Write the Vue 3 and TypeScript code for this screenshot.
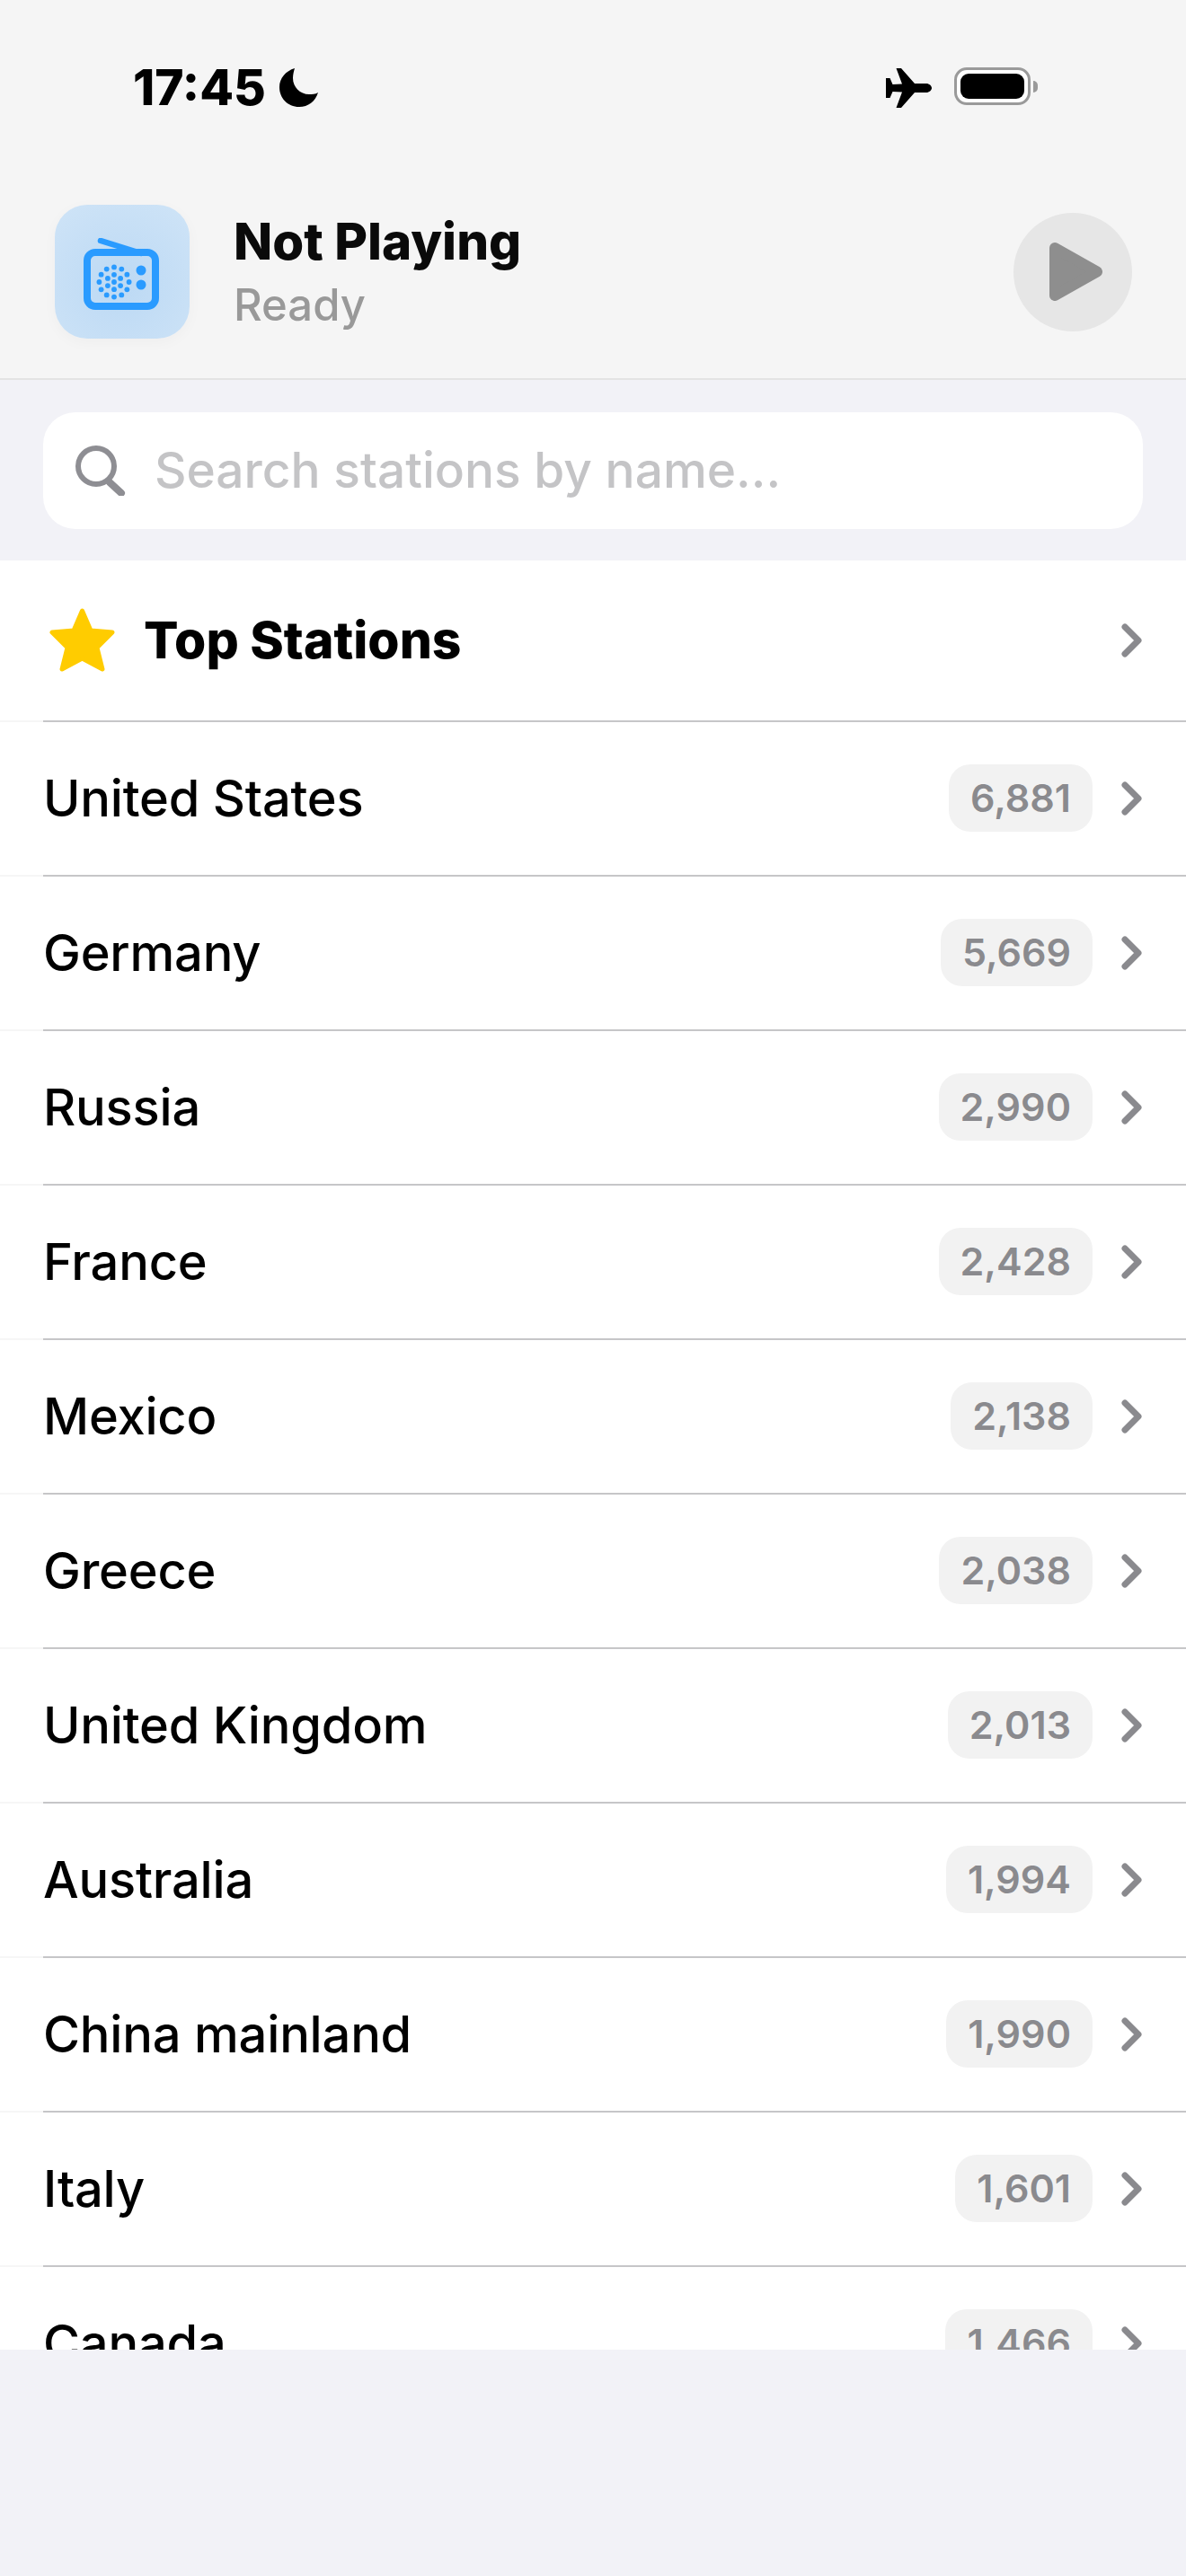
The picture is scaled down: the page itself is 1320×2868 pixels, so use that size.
<script setup lang="ts">
interface Country {
  name: string
  count: string
}

const countries: Country[] = [
  { name: 'United States', count: '6,881' },
  { name: 'Germany', count: '5,669' },
  { name: 'Russia', count: '2,990' },
  { name: 'France', count: '2,428' },
  { name: 'Mexico', count: '2,138' },
  { name: 'Greece', count: '2,038' },
  { name: 'United Kingdom', count: '2,013' },
  { name: 'Australia', count: '1,994' },
  { name: 'China mainland', count: '1,990' },
  { name: 'Italy', count: '1,601' },
  { name: 'Canada', count: '1,466' }
]

// speaker grille of the radio icon: one centre dot and two rings
const grille: { x: number; y: number; r: number }[] = [{ x: 34, y: 34, r: 2.9 }]
for (let i = 0; i < 6; i++) {
  const a = (i * Math.PI) / 3 + Math.PI / 2
  grille.push({ x: 34 + 8.2 * Math.cos(a), y: 34 + 8.2 * Math.sin(a), r: 2.9 })
}
for (let i = 0; i < 12; i++) {
  const a = (i * Math.PI) / 6
  grille.push({ x: 34 + 16.6 * Math.cos(a), y: 34 + 16.6 * Math.sin(a), r: 2.9 })
}
</script>

<template>
  <div class="screen">
    <header class="top">
      <div class="status-bar">
        <div class="status-left">
          <span class="time">17:45</span>
          <svg class="moon" viewBox="0 0 43 43">
            <path d="M17 0C7 3 0 11 0 21c0 12 9 22 22 22 10 0 18-6 21-16-3 2-7 2-10 2-10 0-18-8-18-18 0-4 1-8 2-11z" />
          </svg>
        </div>
        <div class="status-right">
          <svg class="plane" viewBox="0 0 51 44">
            <path d="M45 17c3 0 6 2.500 6 5s-3 5-6 5H32L17 44h-5.500L18 26.500 7.500 26l-3 7H0V11h4.500l3 7 10.500-.5L11.500 0H17l15 17z" />
          </svg>
          <div class="battery">
            <div class="battery-fill"></div>
          </div>
          <div class="battery-tip"></div>
        </div>
      </div>
      <div class="now-playing">
        <div class="art">
          <svg class="radio" viewBox="0 0 84 80">
            <path class="antenna" d="M19 3 L64 17" />
            <rect class="radio-body" x="4" y="16" width="76" height="60" rx="9" />
            <circle v-for="(d, i) in grille" :key="i" class="dot" :cx="d.x" :cy="d.y + 15" :r="d.r" />
            <circle class="dot" cx="64" cy="36" r="5.500" />
            <circle class="dot" cx="64" cy="52" r="5.500" />
          </svg>
        </div>
        <div class="track">
          <div class="track-title">Not Playing</div>
          <div class="track-sub">Ready</div>
        </div>
        <div class="play-btn">
          <svg class="play" viewBox="0 0 59 65">
            <path d="M6 6 L53 32.500 L6 59 Z" />
          </svg>
        </div>
      </div>
    </header>

    <div class="search-wrap">
      <div class="search">
        <svg class="search-icon" viewBox="0 0 56 56">
          <circle cx="23" cy="23" r="20" />
          <path d="M38 41 L51 53" />
        </svg>
        <span class="placeholder">Search stations by name...</span>
      </div>
    </div>

    <div class="list">
      <div class="row row-top">
        <svg class="star" viewBox="0 0 73 71">
          <path d="M36.500 3 L46 25 L70 27 L53 44 L59 68 L36.500 56 L14 68 L20 44 L3 27 L27 25 Z" />
        </svg>
        <span class="top-label">Top Stations</span>
        <svg class="chevron" viewBox="0 0 24 38">
          <path d="M4 4 L19 19 L4 34" />
        </svg>
      </div>
      <div v-for="c in countries" :key="c.name" class="row">
        <span class="name">{{ c.name }}</span>
        <span class="badge">{{ c.count }}</span>
        <svg class="chevron" viewBox="0 0 24 38">
          <path d="M4 4 L19 19 L4 34" />
        </svg>
      </div>
    </div>
  </div>
</template>

<style scoped>
.screen {
  width: 1320px;
  height: 2868px;
  background: #f2f2f7;
  font-family: Inter, 'Noto Sans', sans-serif;
  color: #000;
  overflow: hidden;
}

.top {
  height: 423px;
  box-sizing: border-box;
  background: #f5f5f5;
  border-bottom: 2px solid #e3e3e3;
}

.status-bar {
  height: 228px;
  box-sizing: border-box;
  padding: 75px 165px 0 148px;
  display: flex;
  justify-content: space-between;
  align-items: flex-start;
}

.status-left {
  display: flex;
  align-items: center;
  height: 44px;
  gap: 15px;
}

.time {
  font-size: 55px;
  font-weight: 800;
  line-height: 44px;
}

.moon {
  width: 43px;
  height: 43px;
  fill: #000;
}

.status-right {
  display: flex;
  align-items: flex-start;
}

.plane {
  width: 51px;
  height: 44px;
  margin-top: 1px;
  fill: #000;
  margin-right: 25px;
}

.battery {
  width: 85px;
  height: 42px;
  box-sizing: border-box;
  border: 3px solid #9a9a9a;
  border-radius: 14px;
  background: #fff;
  padding: 4px;
}

.battery-fill {
  height: 100%;
  background: #000;
  border-radius: 9px;
}

.battery-tip {
  width: 5px;
  height: 13px;
  margin: 15px 0 0 3px;
  background: #9a9a9a;
  border-radius: 0 6px 6px 0;
}

.now-playing {
  display: flex;
  align-items: center;
  height: 149px;
  padding: 0 60px 0 61px;
}

.art {
  width: 150px;
  height: 149px;
  border-radius: 36px;
  background: radial-gradient(circle at 50% 60%, #bcd9f4, #cfe4f7);
  box-shadow: 0 4px 16px rgba(0, 0, 0, 0.03);
  display: flex;
  align-items: center;
  justify-content: center;
  flex-shrink: 0;
}

.radio {
  width: 84px;
  height: 80px;
  margin: 4px 2px 0 0;
}

.antenna {
  stroke: #2a9bff;
  stroke-width: 6.500;
  stroke-linecap: round;
  fill: none;
}

.radio-body {
  stroke: #2a9bff;
  stroke-width: 8;
  fill: none;
}

.dot {
  fill: #2a9bff;
}

.track {
  flex: 1;
  margin-left: 49px;
}

.track-title {
  font-size: 56.5px;
  font-weight: 800;
  line-height: 75px;
  color: #0a0a0a;
}

.track-sub {
  font-size: 49px;
  font-weight: 500;
  line-height: 68px;
  color: #999;
}

.play-btn {
  width: 132px;
  height: 132px;
  border-radius: 50%;
  background: #e6e6e6;
  display: flex;
  align-items: center;
  justify-content: center;
}

.play {
  width: 59px;
  height: 65px;
  margin-left: 6px;
}

.play path {
  fill: #8e8e8e;
  stroke: #8e8e8e;
  stroke-width: 12;
  stroke-linejoin: round;
}

.search-wrap {
  padding: 36px 48px 35px;
}

.search {
  display: flex;
  align-items: center;
  height: 130px;
  padding-left: 36px;
  border-radius: 36px;
  background: #fff;
}

.search-icon {
  width: 56px;
  height: 56px;
  margin-right: 32px;
  fill: none;
  stroke: #8e8e93;
}

.search-icon circle {
  stroke-width: 6;
}

.search-icon path {
  stroke-width: 8;
  stroke-linecap: round;
}

.placeholder {
  font-size: 55px;
  font-weight: 500;
  color: #c4c4c6;
  margin-bottom: 2px;
}

.list {
  height: 1992px;
  overflow: hidden;
  background: #fff;
}

/* separator starts at the text inset, a very faint stub runs to the left of it */
.row {
  display: flex;
  align-items: center;
  height: 172px;
  box-sizing: border-box;
  padding: 0 48px 3px;
  background: linear-gradient(to right, #f6f6f6 48px, #c6c6c8 48px) left bottom / 100% 2px no-repeat;
}

.row-top {
  height: 180px;
}

.star {
  width: 73px;
  height: 71px;
  margin-left: 7px;
  margin-right: 32px;
  fill: #ffcc00;
  stroke: #ffcc00;
  stroke-width: 5;
  stroke-linejoin: round;
}

.top-label {
  flex: 1;
  font-size: 57px;
  font-weight: 800;
}

.name {
  flex: 1;
  font-size: 56px;
  font-weight: 500;
  letter-spacing: -0.2px;
}

.badge {
  height: 75px;
  line-height: 75px;
  padding: 0 24px;
  border-radius: 24px;
  background: #f2f2f2;
  color: #8a8a8e;
  font-size: 43px;
  font-weight: 600;
}

.chevron {
  width: 24px;
  height: 38px;
  margin-left: 32px;
  fill: none;
  stroke: #8a8a8e;
  stroke-width: 7;
  stroke-linecap: round;
  stroke-linejoin: round;
}

.row-top .chevron {
  margin-left: 0;
}
</style>

<style>
body {
  background: #f2f2f7;
}
</style>
